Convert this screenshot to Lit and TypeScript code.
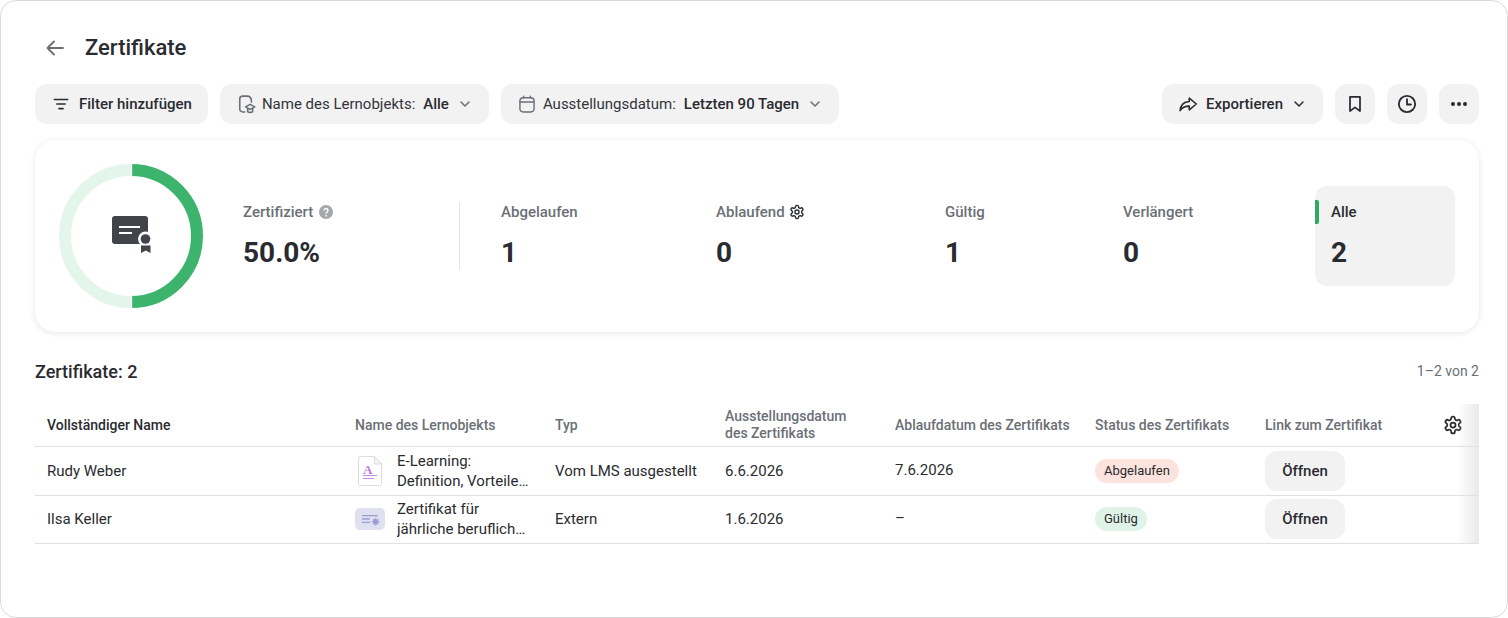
import { LitElement, css, html, svg } from 'lit';
import { customElement } from 'lit/decorators.js';

const gearPath =
  'M12.22 2h-.44a2 2 0 0 0-2 2v.18a2 2 0 0 1-1 1.73l-.43.25a2 2 0 0 1-2 0l-.15-.08a2 2 0 0 0-2.73.73l-.22.38a2 2 0 0 0 .73 2.73l.15.1a2 2 0 0 1 1 1.72v.51a2 2 0 0 1-1 1.74l-.15.09a2 2 0 0 0-.73 2.73l.22.38a2 2 0 0 0 2.73.73l.15-.08a2 2 0 0 1 2 0l.43.25a2 2 0 0 1 1 1.73V20a2 2 0 0 0 2 2h.44a2 2 0 0 0 2-2v-.18a2 2 0 0 1 1-1.73l.43-.25a2 2 0 0 1 2 0l.15.08a2 2 0 0 0 2.73-.73l.22-.39a2 2 0 0 0-.73-2.73l-.15-.08a2 2 0 0 1-1-1.74v-.5a2 2 0 0 1 1-1.74l.15-.09a2 2 0 0 0 .73-2.73l-.22-.38a2 2 0 0 0-2.73-.73l-.15.08a2 2 0 0 1-2 0l-.43-.25a2 2 0 0 1-1-1.73V4a2 2 0 0 0-2-2z';

const icon = (size: number, body: unknown, stroke = '#2a2b30', sw = 2) => html`
  <svg width=${size} height=${size} viewBox="0 0 24 24" fill="none" stroke=${stroke} stroke-width=${sw}
    stroke-linecap="round" stroke-linejoin="round">${body}</svg>
`;

const icons = {
  back: () => icon(24, svg`<path d="M20 12H5M11 5.500 4.500 12l6.500 6.500"/>`, '#6b6f76', 1.9),
  filter: () => icon(20, svg`<path d="M4 6.500h16M7 12h10M9.500 17.500h5"/>`, '#2a2b30', 1.9),
  chevron: () => icon(16, svg`<path d="m6 9.500 6 6 6-6" transform="translate(0 -.5)"/>`, '#6b6f76', 2.2),
  chevronDark: () => icon(16, svg`<path d="m6 9.500 6 6 6-6" transform="translate(0 -.5)"/>`, '#2a2b30', 2.2),
  learning: () => icon(20, svg`
    <path d="M10.500 21.500H8a3.500 3.500 0 0 1-3.500-3.500V6A3.500 3.500 0 0 1 8 2.500h5c3.500 0 5.500 2.500 5.500 6v1"/>
    <path d="m11.500 15.500 5.500-3 5.500 3-5.500 3zM14 17.500v3.200c0 .8 1 1.300 3 1.300s3-.5 3-1.300v-3.200"/>`, '#6b6f76', 1.9),
  calendar: () => icon(20, svg`
    <rect x="3.500" y="4.500" width="17" height="17" rx="4"/><path d="M3.500 9.500h17M8 2.500v2M16 2.500v2"/>`, '#6b6f76', 1.7),
  share: () => icon(20, svg`
    <path d="M13.500 5v4C6.500 9.500 3 14 2.500 20c2.500-4 5.500-5.500 11-5.500V19l8.500-7z"/>`, '#2a2b30', 1.9),
  bookmark: () => icon(20, svg`<path d="M6 3.500h12v17l-6-4.500-6 4.500z"/>`, '#2a2b30', 2.1),
  clock: () => icon(22, svg`<circle cx="12" cy="12" r="8.900"/><path d="M12 6.800V12.500h4.300"/>`, '#2a2b30', 2),
  dots: () => html`
    <svg width="20" height="20" viewBox="0 0 20 20" fill="#2a2b30">
      <circle cx="4" cy="10" r="2"/><circle cx="10" cy="10" r="2"/><circle cx="16" cy="10" r="2"/>
    </svg>`,
  gear: (size: number) => icon(size, svg`<path d=${gearPath}/><circle cx="12" cy="12" r="3"/>`, '#2a2b30', 2.1),
};

const rows = [
  {
    name: 'Rudy Weber',
    object: 'E-Learning: Definition, Vorteile und Beispiele im Unternehmen',
    kind: 'doc',
    type: 'Vom LMS ausgestellt',
    issued: '6.6.2026',
    expires: '7.6.2026',
    status: 'Abgelaufen',
    tone: 'bad',
  },
  {
    name: 'Ilsa Keller',
    object: 'Zertifikat für jährliche berufliche Weiterbildung',
    kind: 'cert',
    type: 'Extern',
    issued: '1.6.2026',
    expires: '–',
    status: 'Gültig',
    tone: 'good',
  },
];

@customElement('app-root')
export class AppRoot extends LitElement {
  static styles = css`
    :host {
      display: block;
      font-family: Roboto, 'Liberation Sans', sans-serif;
      color: #2a2b30;
      font-size: 15px;
      line-height: 20px;
    }
    * {
      box-sizing: border-box;
    }
    svg {
      display: block;
      flex: none;
    }
    .frame {
      height: 618px;
      border: 1px solid #dcdcdc;
      border-radius: 16px;
      padding: 27px 28px 0 34px;
      background: #fff;
    }
    .head {
      display: flex;
      align-items: center;
      height: 40px;
      padding-left: 8px;
      gap: 18px;
    }
    h1 {
      margin: 0;
      font-size: 22px;
      line-height: 40px;
      font-weight: 500;
    }
    .toolbar {
      display: flex;
      gap: 12px;
      margin-top: 16px;
    }
    .btn {
      display: flex;
      align-items: center;
      height: 40px;
      padding: 0 16px;
      border-radius: 12px;
      background: #f2f2f3;
      white-space: nowrap;
      font-weight: 500;
    }
    .btn.square {
      width: 40px;
      padding: 0;
      justify-content: center;
    }
    .btn.filter {
      gap: 8px;
    }
    .btn.field {
      color: #33353a;
      font-weight: 400;
    }
    .btn.field b {
      font-weight: 500;
      color: #2a2b30;
      margin-left: 8px;
      margin-right: 8px;
    }
    .btn.field svg:first-child {
      margin-right: 6px;
    }
    .btn.export {
      gap: 8px;
      margin-left: auto;
    }
    .card {
      display: flex;
      align-items: center;
      height: 192px;
      margin-top: 16px;
      padding-left: 24px;
      border-radius: 20px;
      background: #fff;
      box-shadow: 0 1px 6px rgba(0, 0, 0, 0.1);
    }
    .donut {
      position: relative;
      width: 144px;
      height: 144px;
      flex: none;
      margin-right: 40px;
    }
    .donut .badge {
      position: absolute;
      left: 53px;
      top: 52px;
    }
    .primary {
      width: 216px;
      flex: none;
    }
    .primary .hint {
      margin-left: 2px;
    }
    .divider {
      width: 1px;
      height: 68px;
      background: #e3e3e5;
      flex: none;
      margin-right: 25px;
    }
    .stats {
      display: grid;
      grid-template-columns: 215px 229px 178px 208px 140px;
    }
    .stat {
      position: relative;
      height: 100px;
      padding: 16px;
      border-radius: 12px;
    }
    .primary.stat {
      padding-left: 0;
    }
    .label {
      display: flex;
      align-items: center;
      gap: 4px;
      color: #6b6f76;
      font-weight: 500;
      height: 20px;
    }
    .value {
      margin-top: 15px;
      font-size: 28px;
      line-height: 32px;
      font-weight: 700;
    }
    .stat.active {
      background: #f2f2f3;
    }
    .stat.active .label {
      color: #2a2b30;
    }
    .stat.active::before {
      content: '';
      position: absolute;
      left: 0;
      top: 14px;
      width: 4px;
      height: 24px;
      background: #2fa866;
      border-radius: 0 2px 2px 0;
    }
    .summary {
      display: flex;
      align-items: center;
      justify-content: space-between;
      margin-top: 28px;
      height: 24px;
    }
    .summary h2 {
      margin: 0;
      font-size: 18px;
      line-height: 24px;
      font-weight: 500;
    }
    .summary span {
      color: #6b6f76;
      font-size: 14px;
      margin-bottom: 2px;
    }
    .table {
      position: relative;
      margin-top: 20px;
    }
    .row {
      display: grid;
      grid-template-columns: 308px 200px 170px 170px 200px 170px 170px 56px;
      align-items: center;
      height: 49px;
      border-bottom: 1px solid #e0e0e2;
    }
    .row > div {
      padding: 0 12px;
    }
    .row.last {
      height: 48px;
      padding-bottom: 1px;
    }
    .row > .expires {
      margin-bottom: 2px;
    }
    .row.header {
      height: 43px;
      font-size: 14px;
      font-weight: 500;
      color: #6b6f76;
      line-height: 17px;
    }
    .row.header .strong {
      color: #2a2b30;
    }
    .shade {
      position: absolute;
      right: 0;
      top: 0;
      bottom: 0;
      width: 22px;
      background: linear-gradient(to right, rgba(225, 225, 225, 0), rgba(225, 225, 225, 0.75));
      pointer-events: none;
    }
    .gear-cell {
      display: flex;
      justify-content: center;
      padding: 0 0 0 4px !important;
    }
    .object {
      display: flex;
      align-items: center;
      gap: 12px;
    }
    .object .thumb {
      width: 30px;
      flex: none;
      display: flex;
      justify-content: center;
    }
    .object .title {
      display: -webkit-box;
      -webkit-line-clamp: 2;
      -webkit-box-orient: vertical;
      overflow: hidden;
      width: 134px;
      line-height: 20px;
    }
    .pill {
      display: inline-flex;
      align-items: center;
      height: 24px;
      padding: 0 9px;
      border-radius: 12px;
      font-size: 13px;
    }
    .pill.bad {
      background: #fde3de;
    }
    .pill.good {
      background: #dff3e8;
    }
    .open {
      display: flex;
      align-items: center;
      justify-content: center;
      width: 80px;
      height: 40px;
      border-radius: 12px;
      background: #f2f2f3;
      font-weight: 500;
    }
    .doc-letter {
      font-family: 'Liberation Serif', serif;
      font-size: 13px;
      font-weight: 700;
      fill: #c27be6;
    }
  `;

  private thumb(kind: string) {
    if (kind === 'doc') {
      return html`
        <svg width="24" height="30" viewBox="0 0 24 30" fill="none">
          <path d="M2.500.5H16.500l7 7.500v19.500a2 2 0 0 1-2 2h-19a2 2 0 0 1-2-2v-25a2 2 0 0 1 2-2z"
            fill="#fff" stroke="#dcdcde"/>
          <path d="M16.500.5V8h7z" fill="#f5f5f7" stroke="#dcdcde"/>
          <text class="doc-letter" x="5" y="17.500">A</text>
          <path d="M5 19.500h14M5 22.500h11" stroke="#c98cea" stroke-width="1.200"/>
        </svg>`;
    }
    return html`
      <svg width="30" height="22" viewBox="0 0 30 22" fill="none">
        <rect width="30" height="22" rx="5" fill="#dfe1f1"/>
        <path d="M7 7.700h16M7 11h8M7 14.300h8" stroke="#9a9dd4" stroke-width="1.300"/>
        <circle cx="20.700" cy="13.700" r="2.800" fill="#9a9dd4"/>
        <path d="M20.700 9.700v8M16.700 13.700h8M17.900 10.900l5.600 5.600M23.500 10.900l-5.600 5.600" stroke="#9a9dd4"/>
      </svg>`;
  }

  private stat(label: string, value: string, extra?: unknown, active = false) {
    return html`
      <div class="stat ${active ? 'active' : ''}">
        <div class="label">${label}${extra ?? ''}</div>
        <div class="value">${value}</div>
      </div>
    `;
  }

  render() {
    return html`
      <div class="frame">
        <div class="head">
          ${icons.back()}
          <h1>Zertifikate</h1>
        </div>

        <div class="toolbar">
          <div class="btn filter">${icons.filter()}<span>Filter hinzufügen</span></div>
          <div class="btn field">
            ${icons.learning()}Name des Lernobjekts:<b>Alle</b>${icons.chevron()}
          </div>
          <div class="btn field">
            ${icons.calendar()}Ausstellungsdatum:<b>Letzten 90 Tagen</b>${icons.chevron()}
          </div>
          <div class="btn export">${icons.share()}<span>Exportieren</span>${icons.chevronDark()}</div>
          <div class="btn square">${icons.bookmark()}</div>
          <div class="btn square">${icons.clock()}</div>
          <div class="btn square">${icons.dots()}</div>
        </div>

        <div class="card">
          <div class="donut">
            <svg width="144" height="144" viewBox="0 0 144 144" fill="none">
              <path d="M72 6A66 66 0 0 0 72 138" stroke="#e4f5ec" stroke-width="12"/>
              <path d="M72 6A66 66 0 0 1 72 138" stroke="#3cb46e" stroke-width="12"/>
              <path d="M72.500 0v12M72.500 132v12" stroke="#fff" stroke-width="1.300"/>
            </svg>
            <svg class="badge" width="42" height="40" viewBox="0 0 42 40">
              <rect x="0" y="0" width="36" height="28" rx="3" fill="#41444b"/>
              <path d="M7 11h21M7 17h13" stroke="#fff" stroke-width="2" fill="none"/>
              <circle cx="33.500" cy="23" r="7.500" fill="#fff"/>
              <circle cx="33.500" cy="23" r="4.800" fill="#41444b"/>
              <path d="M29 29.500h9.500V37l-4.750-2.500L29 37z" fill="#41444b"/>
            </svg>
          </div>
          <div class="primary stat">
            <div class="label">
              Zertifiziert
              <svg class="hint" width="14" height="14" viewBox="0 0 16 16">
                <circle cx="8" cy="8" r="8" fill="#a5a7ac"/>
                <path d="M5.800 6.300a2.200 2.200 0 1 1 3.400 1.800c-.8.500-1.200.9-1.200 1.700" stroke="#fff" stroke-width="1.700" fill="none"/>
                <circle cx="8" cy="12.200" r="1" fill="#fff"/>
              </svg>
            </div>
            <div class="value">50.0%</div>
          </div>
          <div class="divider"></div>
          <div class="stats">
            ${this.stat('Abgelaufen', '1')}
            ${this.stat('Ablaufend', '0', icons.gear(16))}
            ${this.stat('Gültig', '1')}
            ${this.stat('Verlängert', '0')}
            ${this.stat('Alle', '2', undefined, true)}
          </div>
        </div>

        <div class="summary">
          <h2>Zertifikate: 2</h2>
          <span>1–2 von 2</span>
        </div>

        <div class="table">
          <div class="row header">
            <div class="strong">Vollständiger Name</div>
            <div>Name des Lernobjekts</div>
            <div>Typ</div>
            <div>Ausstellungsdatum<br />des Zertifikats</div>
            <div>Ablaufdatum des Zertifikats</div>
            <div>Status des Zertifikats</div>
            <div>Link zum Zertifikat</div>
            <div class="gear-cell">${icons.gear(20)}</div>
          </div>
          ${rows.map(
            (r, i) => html`
              <div class="row ${i === rows.length - 1 ? 'last' : ''}">
                <div>${r.name}</div>
                <div class="object">
                  <div class="thumb">${this.thumb(r.kind)}</div>
                  <div class="title">${r.object}</div>
                </div>
                <div>${r.type}</div>
                <div>${r.issued}</div>
                <div class="expires">${r.expires}</div>
                <div><span class="pill ${r.tone}">${r.status}</span></div>
                <div><div class="open">Öffnen</div></div>
                <div></div>
              </div>
            `,
          )}
          <div class="shade"></div>
        </div>
      </div>
    `;
  }
}
